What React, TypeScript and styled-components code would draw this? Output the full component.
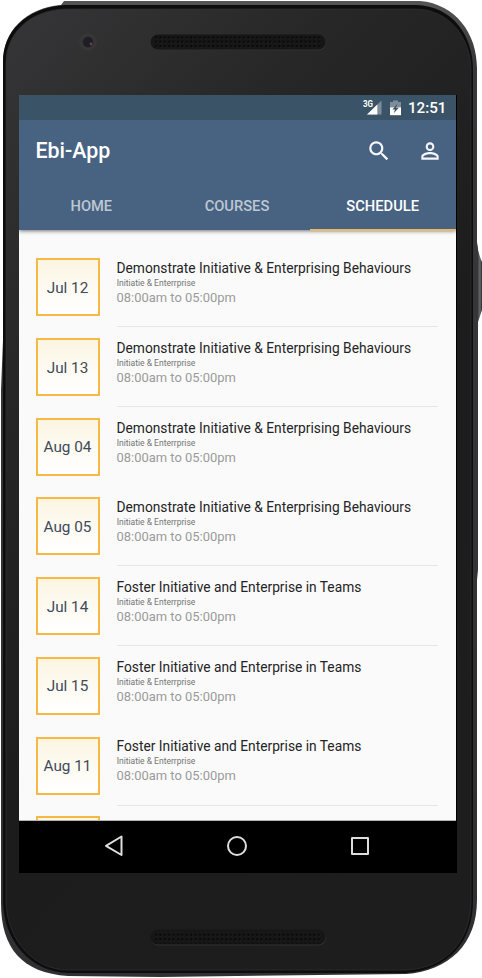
import React from 'react';
import styled, { createGlobalStyle } from 'styled-components';

const GlobalStyle = createGlobalStyle`
  * { box-sizing: border-box; }
  html, body { margin: 0; padding: 0; background: #fff; }
  body { overflow: hidden; font-family: Roboto, "Liberation Sans", sans-serif; }
`;

const Stage = styled.main`
  position: relative;
  width: 482px;
  height: 978px;
  overflow: hidden;
`;

const Casing = styled.svg`
  position: absolute;
  inset: 0;
  display: block;
`;

const Device = styled.div`
  position: relative;
  height: 978px;
  padding: 95px 25px 104px 19px;
`;

const Screen = styled.div`
  display: flex;
  flex-direction: column;
  width: 438px;
  height: 778px;
  background: #000;
`;

const Viewport = styled.div`
  width: 437px;
  height: 726px;
  background: #fafafa;
  overflow: hidden;
  border-bottom: 1px solid #b5b5b5;
`;

const StatusBar = styled.div`
  position: relative;
  z-index: 1;
  display: flex;
  align-items: center;
  justify-content: flex-end;
  height: 25px;
  padding-right: 9.5px;
  background: #3a5367;
  color: #fff;
`;

const Clock = styled.span`
  margin-left: 6px;
  font-size: 15.2px;
  font-weight: 500;
  line-height: 25px;
  padding-top: 1px;
`;

const Header = styled.header`
  position: relative;
  height: 110px;
  background: #486382;
  box-shadow: 0 1px 4px rgba(0, 0, 0, 0.55);
`;

const TitleBar = styled.div`
  display: flex;
  align-items: center;
  height: 60px;
  padding: 0 15px 0 17px;
`;

const AppTitle = styled.h1`
  flex: 1;
  margin: 2px 0 0 -0.5px;
  color: #fff;
  font-size: 21.4px;
  font-weight: 500;
  line-height: 28px;
`;

const IconButton = styled.button`
  display: grid;
  place-items: center;
  width: 24px;
  height: 24px;
  margin-left: 27px;
  padding: 0;
  border: 0;
  background: transparent;
  color: #f5f6f8;
`;

const Tabs = styled.nav`
  display: grid;
  grid-template-columns: repeat(3, 1fr);
  height: 50px;
`;

const Tab = styled.button<{ $active?: boolean }>`
  padding: 3px 1px 0 0;
  border: 0;
  border-bottom: 2px solid ${p => (p.$active ? '#e9ba6c' : 'transparent')};
  background: transparent;
  color: ${p => (p.$active ? '#fff' : '#bec8d2')};
  font: 500 14.7px/46px Roboto, sans-serif;
`;

const Schedule = styled.section`
  padding: 16.4px 18px 0 17px;
`;

const Session = styled.article`
  display: grid;
  grid-template-columns: 64px 1fr;
  column-gap: 17px;
  height: 79.7px;
  padding-top: 12px;
`;

const DateTile = styled.time`
  display: grid;
  place-items: center;
  height: 58px;
  padding: 1px 1px 0 0;
  border: 2px solid #f8b944;
  background: linear-gradient(#fbf5e2, #fff);
  color: #3f4a5a;
  font-size: 15.3px;
  line-height: 20px;
`;

const Details = styled.div<{ $divided: boolean }>`
  display: flex;
  flex-direction: column;
  height: 69px;
  padding-top: 0.8px;
  border-bottom: 1px solid ${p => (p.$divided ? '#e6e6e6' : 'transparent')};
`;

const CourseName = styled.h2`
  margin: 0 0 0 -0.5px;
  color: #242424;
  font-size: 13.78px;
  font-weight: 400;
  line-height: 19px;
  white-space: nowrap;
`;

const Category = styled.span`
  margin-left: -0.3px;
  color: #747474;
  font-size: 8.5px;
  line-height: 11px;
`;

const Hours = styled.span`
  margin-left: -0.5px;
  color: #9b9b9b;
  font-size: 12.95px;
  line-height: 18px;
`;

const NavBar = styled.footer`
  display: flex;
  align-items: center;
  justify-content: space-between;
  height: 52px;
  padding: 0 86px 2px 84px;
`;

const NavIcon = styled.svg`
  display: block;
  fill: none;
  stroke: #ddd;
  stroke-width: 2;
  stroke-linejoin: round;
`;

const demonstrate = 'Demonstrate Initiative & Enterprising Behaviours';
const foster = 'Foster Initiative and Enterprise in Teams';

const sessions = [
  { date: 'Jul 12', course: demonstrate, divided: true },
  { date: 'Jul 13', course: demonstrate, divided: true },
  { date: 'Aug 04', course: demonstrate, divided: false },
  { date: 'Aug 05', course: demonstrate, divided: true },
  { date: 'Jul 14', course: foster, divided: true },
  { date: 'Jul 15', course: foster, divided: false },
  { date: 'Aug 11', course: foster, divided: true },
];

const NextTile = styled(DateTile)`
  height: 58px;
`;

function Speaker({ y }: { y: number }) {
  return (
    <g>
      <rect x="151" y={y + 0.5} width="175" height="15" rx="7.5" fill="#303030" />
      <rect x="150.5" y={y - 0.5} width="175" height="15" rx="7.5" fill="#161616" />
      <rect x="154" y={y + 1.5} width="168" height="12" fill="url(#holes)" />
    </g>
  );
}

function PhoneCasing() {
  return (
    <Casing width="482" height="978" viewBox="0 0 482 978" aria-hidden="true">
      <defs>
        <linearGradient id="face" x1="0" y1="0" x2="0.55" y2="1">
          <stop offset="0" stopColor="#363638" />
          <stop offset="0.3" stopColor="#272727" />
          <stop offset="0.65" stopColor="#1c1c1c" />
          <stop offset="1" stopColor="#1d1d1e" />
        </linearGradient>
        <linearGradient id="button" x1="0" x2="1">
          <stop offset="0" stopColor="#303033" />
          <stop offset="0.6" stopColor="#69696e" />
          <stop offset="1" stopColor="#29292b" />
        </linearGradient>
        <linearGradient id="rim" x1="0" y1="0" x2="0" y2="1">
          <stop offset="0" stopColor="#555" />
          <stop offset="0.06" stopColor="#38383a" />
          <stop offset="1" stopColor="#302f31" />
        </linearGradient>
        <pattern id="holes" width="4.4" height="4.4" patternUnits="userSpaceOnUse">
          <circle cx="2" cy="2" r="1" fill="#030303" />
          <circle cx="2.8" cy="3.5" r="0.5" fill="#292929" />
        </pattern>
      </defs>
      <path d="M477 244 Q479 256 482 262 V310 L478 322 L477 328Z" fill="url(#button)" />
      <path d="M3 62 C3 32 25 8 61 5 L64 1 H420 C456 4 477 34 477 68 V242 L478 250 V570 L477 580 V900 C477 944 449 971 406 974 L160 977 L68 976 C22 973 1 948 1 903 V390 L3 340Z" fill="url(#rim)" />
      <path d="M3 62 C3 32 25 8 65 5 H416 C453 6 473 36 473 70 V900 C473 942 449 969 406 973 H68 C31 972 3 941 3 900Z" fill="#0d0d0d" />
      <path d="M6 63 C6 33 30 10 66 9 H415 C449 9 471 38 471 70 V900 C471 940 447 968 406 970 H68 C34 970 6 940 6 900Z" fill="url(#face)" stroke="#303030" strokeWidth="0.7" />
      <circle cx="88" cy="42" r="9" fill="#363637" />
      <circle cx="88" cy="42" r="5.2" fill="#1f1d26" />
      <circle cx="91" cy="44" r="1.4" fill="#66424e" />
      <Speaker y={35} />
      <Speaker y={930} />
    </Casing>
  );
}

function StatusIcons() {
  return (
    <svg width="40" height="18" viewBox="0 0 40 18" aria-hidden="true">
      <text x="1" y="8.4" fill="#fff" fontFamily="Roboto" fontSize="8.5" fontWeight="700" textLength="10" lengthAdjust="spacingAndGlyphs">3G</text>
      <path d="M19.5 1.5 V15.5 H5Z" fill="#7d8d99" />
      <path d="M15.3 5.5 V15.5 H5Z" fill="#fff" />
      <path d="M28 3 H31 V1.5 H36 V3 H39 V9 H28Z" fill="#7d8d99" />
      <path d="M28 8.4 H39 V16.2 H28Z" fill="#fff" />
      <path d="M35.4 4.8 L30.5 10.4 H33 L31.7 14.2 L36.8 8.8 H34Z" fill="#3a5367" />
    </svg>
  );
}

export default function App() {
  return (
    <Stage>
      <GlobalStyle />
      <PhoneCasing />
      <Device>
        <Screen>
          <Viewport>
            <StatusBar>
              <StatusIcons />
              <Clock>12:51</Clock>
            </StatusBar>
            <Header>
              <TitleBar>
                <AppTitle>Ebi-App</AppTitle>
                <IconButton aria-label="Search">
                  <svg width="26" height="26" viewBox="0 0 24 24" fill="currentColor">
                    <path d="M15.5 14h-.79l-.28-.27A6.5 6.5 0 1 0 13.73 14.43l.27.28v.79l5 4.99L20.49 19l-4.99-5zm-6 0a4.5 4.5 0 1 1 0-9 4.5 4.5 0 0 1 0 9z" />
                  </svg>
                </IconButton>
                <IconButton aria-label="Profile">
                  <svg width="26" height="26" viewBox="0 0 24 24" fill="currentColor">
                    <path d="M12 5.9a2.1 2.1 0 1 1 0 4.2 2.1 2.1 0 0 1 0-4.2m0 9c2.97 0 6.1 1.46 6.1 2.1v1.1H5.9V17c0-.64 3.13-2.1 6.1-2.1M12 4a4 4 0 1 0 0 8 4 4 0 0 0 0-8zm0 9c-2.67 0-8 1.34-8 4v3h16v-3c0-2.66-5.33-4-8-4z" />
                  </svg>
                </IconButton>
              </TitleBar>
              <Tabs>
                <Tab>HOME</Tab>
                <Tab>COURSES</Tab>
                <Tab $active>SCHEDULE</Tab>
              </Tabs>
            </Header>
            <Schedule>
              {sessions.map(session => (
                <Session key={session.date}>
                  <DateTile>{session.date}</DateTile>
                  <Details $divided={session.divided}>
                    <CourseName>{session.course}</CourseName>
                    <Category>Initiatie &amp; Enterrprise</Category>
                    <Hours>08:00am to 05:00pm</Hours>
                  </Details>
                </Session>
              ))}
              <Session>
                <NextTile />
                <Details $divided={false}>
                  <CourseName>{foster}</CourseName>
                </Details>
              </Session>
            </Schedule>
          </Viewport>
          <NavBar>
            <NavIcon width="22" height="22" viewBox="0 0 22 22"><path d="M18.5 1.5 V20 L3 10.8Z" /></NavIcon>
            <NavIcon width="22" height="22" viewBox="0 0 22 22"><circle cx="11" cy="11" r="9" /></NavIcon>
            <NavIcon width="22" height="22" viewBox="0 0 22 22"><rect x="3" y="3" width="16" height="16" /></NavIcon>
          </NavBar>
        </Screen>
      </Device>
    </Stage>
  );
}
